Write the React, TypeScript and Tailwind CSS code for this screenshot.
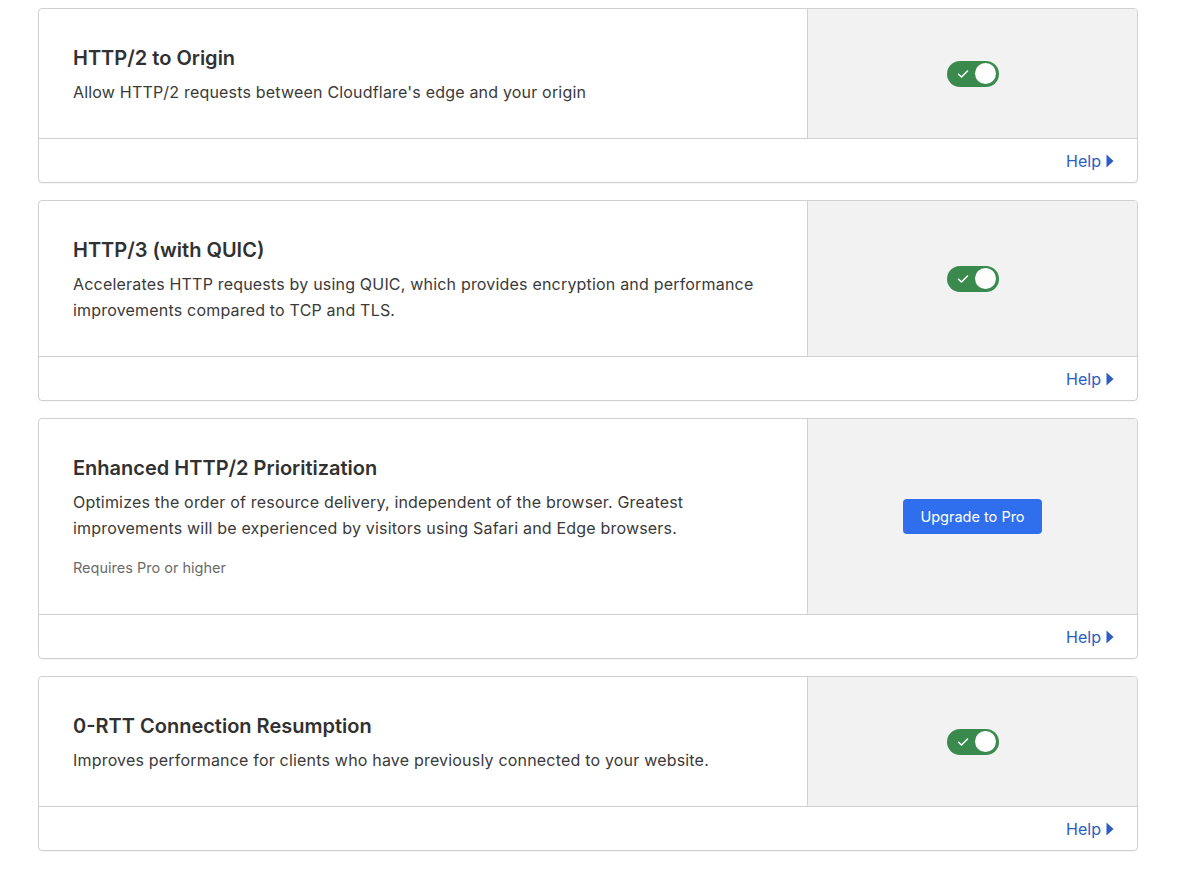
import React from "react";

type Setting = {
  title: string;
  description: string;
  note?: string;
  control: "toggle" | "upgrade";
};

const settings: Setting[] = [
  {
    title: "HTTP/2 to Origin",
    description: "Allow HTTP/2 requests between Cloudflare's edge and your origin",
    control: "toggle",
  },
  {
    title: "HTTP/3 (with QUIC)",
    description:
      "Accelerates HTTP requests by using QUIC, which provides encryption and performance improvements compared to TCP and TLS.",
    control: "toggle",
  },
  {
    title: "Enhanced HTTP/2 Prioritization",
    description:
      "Optimizes the order of resource delivery, independent of the browser. Greatest improvements will be experienced by visitors using Safari and Edge browsers.",
    note: "Requires Pro or higher",
    control: "upgrade",
  },
  {
    title: "0-RTT Connection Resumption",
    description: "Improves performance for clients who have previously connected to your website.",
    control: "toggle",
  },
];

function Toggle() {
  return (
    <button className="relative flex h-[26px] w-[52px] items-center rounded-full bg-[#3b8a4d] px-[3px]">
      <svg width="12" height="10" viewBox="0 0 12 10" className="ml-[7px]">
        <path d="M1.5 5.2 L4.5 8 L10.5 2" fill="none" stroke="white" strokeWidth="1.5" strokeLinecap="round" strokeLinejoin="round" />
      </svg>
      <span className="ml-auto h-[21px] w-[21px] rounded-full bg-white" />
    </button>
  );
}

function SettingCard({ setting }: { setting: Setting }) {
  return (
    <div className="overflow-hidden rounded-[4px] border border-[#d0d0d0] bg-white shadow-[0_1px_1px_rgba(0,0,0,0.04)]">
      <div className="flex border-b border-[#d0d0d0]">
        <div className="flex-1 pb-[33px] pl-[34px] pr-6 pt-[35px]">
          <h3 className="text-[20px] font-semibold leading-[28px] text-[#313131]">{setting.title}</h3>
          <p className="mt-[7px] max-w-[700px] text-[16px] leading-[26px] tracking-[0.012em] text-[#3a3a3a]">
            {setting.description}
          </p>
          {setting.note && <p className="mb-px mt-[15px] text-[14.5px] leading-[24px] text-[#6b6b6b]">{setting.note}</p>}
        </div>
        <div className="flex w-[330px] items-center justify-center border-l border-[#d0d0d0] bg-[#f2f2f2]">
          {setting.control === "toggle" ? (
            <Toggle />
          ) : (
            <button className="h-[35px] rounded-[4px] bg-[#2f6fed] px-[17px] text-[14.5px] text-white">Upgrade to Pro</button>
          )}
        </div>
      </div>
      <div className="flex h-[43px] items-center justify-end pr-[23px]">
        <a className="flex items-center gap-[5px] text-[16px] text-[#2c5cc5]">
          Help
          <svg width="8" height="14" viewBox="0 0 8 14">
            <path d="M0.5 0.5 L7.5 7 L0.5 13.5 Z" fill="#2c5cc5" />
          </svg>
        </a>
      </div>
    </div>
  );
}

export default function App() {
  return (
    <div className="min-h-[877px] bg-white pt-2" style={{ fontFamily: "Inter, 'Noto Sans', sans-serif" }}>
      <div className="ml-[38px] flex w-[1100px] flex-col gap-[17px]">
        {settings.map((s) => (
          <SettingCard key={s.title} setting={s} />
        ))}
      </div>
    </div>
  );
}
